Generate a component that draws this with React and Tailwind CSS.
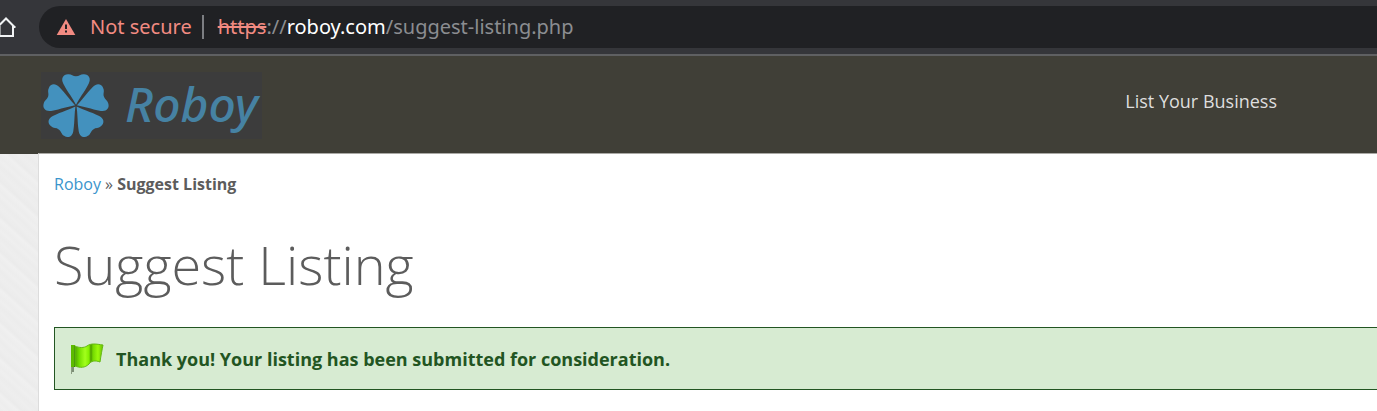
const petals = [0, 72, 144, 216, 288];

function HomeIcon() {
  return (
    <svg width="28" height="24" viewBox="0 0 28 24" fill="none" stroke="#f1f3f4" strokeWidth="2" className="-ml-2 shrink-0" aria-hidden="true">
      <path d="M5 12.5 14 3.5 23 12.5M4.5 12H7.5V21H21V12H23.5" />
    </svg>
  );
}

function WarningIcon() {
  return (
    <svg width="20" height="18" viewBox="0 0 20 18" className="shrink-0" aria-hidden="true">
      <path fill="#f28b82" d="M10 1 19.3 17H.7z" />
      <path fill="#202124" d="M9 6.5h2v4.5H9zM9 12.5h2v2H9z" />
    </svg>
  );
}

function Clover() {
  return (
    <svg width="68" height="66" viewBox="-102 -98 204 198" aria-hidden="true">
      {petals.map((angle) => (
        <path
          key={angle}
          transform={`rotate(${angle})`}
          fill="#4391be"
          d="M0-3C-5-12-11-22-17-31C-24-42-31-52-38-66C-46-80-39-94-24-94C-14-95-10-88 0-88C10-88 14-95 24-94C39-94 46-80 38-66C31-52 24-42 17-31C11-22 5-12 0-3Z"
        />
      ))}
    </svg>
  );
}

function FlagIcon() {
  return (
    <svg width="34" height="32" viewBox="0 0 34 32" className="shrink-0" aria-hidden="true">
      <defs>
        <linearGradient id="flag" x1="0" x2="1">
          <stop offset="0" stopColor="#4fa800" />
          <stop offset=".16" stopColor="#74e000" />
          <stop offset=".36" stopColor="#a2ff1c" />
          <stop offset=".5" stopColor="#83ef00" />
          <stop offset=".57" stopColor="#4c9a00" />
          <stop offset=".64" stopColor="#73d800" />
          <stop offset=".82" stopColor="#9bfa0c" />
          <stop offset="1" stopColor="#69bd00" />
        </linearGradient>
      </defs>
      <path fill="#8b9c83" d="M1 3h1v28H1z" />
      <path fill="#7d8f76" d="M2 3h2v26H2z" />
      <path fill="#5cbb00" d="M1 2h4v22H1z" />
      <path fill="#377f00" d="M4 3h1v21H4z" />
      <path
        fill="url(#flag)"
        stroke="#64b814"
        strokeWidth="1"
        d="M5 3c4 2 9 2 12 0 4-3 9-2 16-1-1 5-2 10-3 17-5-2-9-1-11 2-4 4-9 4-14 2Z"
      />
    </svg>
  );
}

function BrowserBar() {
  return (
    <div className="flex h-14 items-center border-b-2 border-[#5f6062] bg-[#35363a]">
      <button type="button" aria-label="Home" className="w-[39px] shrink-0">
        <HomeIcon />
      </button>
      <div className="flex h-[42px] min-w-0 flex-1 items-center rounded-l-full bg-[#202124] pl-[17px] font-['Noto_Sans',sans-serif] text-xl whitespace-nowrap">
        <WarningIcon />
        <span className="ml-3.5 text-[#f28b82]">Not secure</span>
        <span className="ml-2.5 mr-3.5 h-6 w-0.5 bg-[#7c7e82]" />
        <div role="textbox" aria-label="Address" aria-readonly="true" className="text-[#8b8d91]">
          <span className="text-[#f28b82] line-through">https</span>://
          <span className="text-white">roboy.com</span>/suggest-listing.php
        </div>
      </div>
    </div>
  );
}

function SiteHeader() {
  return (
    <header className="flex items-start justify-between bg-[#403f37] pt-4 pr-[100px] pb-[15px] pl-[41px]">
      <a href="#home" className="flex h-[67px] w-[221px] items-center justify-between bg-[#3c3c3c] pr-1 pl-px text-[#4682a3]">
        <Clover />
        <span className="pb-1 font-['Noto_Sans',sans-serif] text-5xl font-medium italic">Roboy</span>
      </a>
      <nav className="pt-[15px]" aria-label="Primary">
        <a href="#list" className="text-lg text-[#dedede]">
          List Your Business
        </a>
      </nav>
    </header>
  );
}

export default function App() {
  return (
    <div className="flex min-h-screen flex-col bg-[#eeeeee] font-['Open_Sans',sans-serif] text-[#5c5c5c]">
      <BrowserBar />
      <SiteHeader />
      <div className="flex flex-1 bg-[repeating-linear-gradient(42deg,#ececec_0px,#efefef_4px,#ededed_7px,#f0f0f0_12px,#ebebeb_15px,#eeeeee_21px,#ececec_26px)] pl-[38px]">
        <main className="-mt-px flex-1 border-t border-l border-t-[#aaa9a5] border-l-[#dcdcdc] bg-white pt-[18px] pl-[15px]">
          <nav aria-label="Breadcrumb" className="text-base">
            <a href="#home" className="text-[#3a94cc]">Roboy</a> » <b className="font-bold">Suggest Listing</b>
          </nav>
          <h1 className="mt-8 text-[54px] leading-[72px] font-light">Suggest Listing</h1>
          <div role="status" className="mt-[27px] flex h-[63px] items-center border border-r-0 border-[#225522] bg-[#d7ebd2] pl-[15px]">
            <FlagIcon />
            <p className="ml-3 text-lg font-bold text-[#225522]">
              Thank you! Your listing has been submitted for consideration.
            </p>
          </div>
        </main>
      </div>
    </div>
  );
}
